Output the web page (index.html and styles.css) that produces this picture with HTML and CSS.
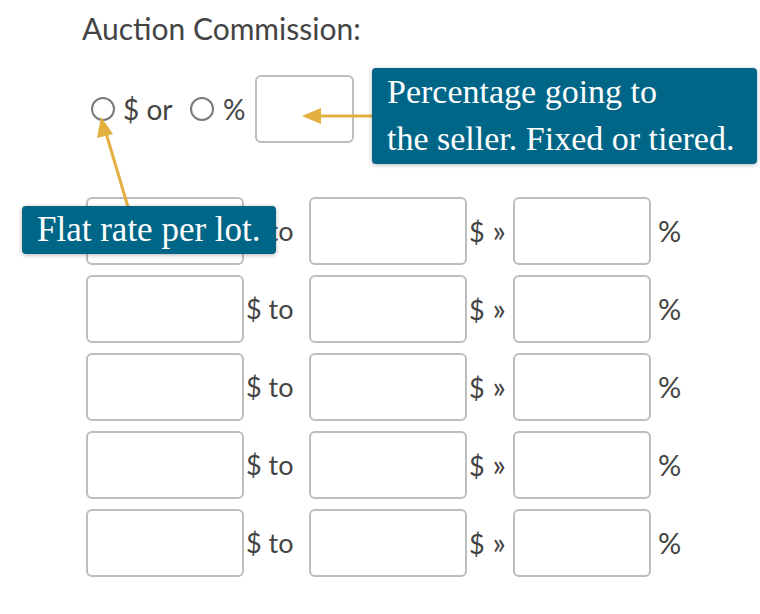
FILE: index.html
```html
<!DOCTYPE html>
<html>
<head>
<meta charset="utf-8">
<link rel="stylesheet" href="styles.css">
</head>
<body>
<div class="page">
  <div class="title">Auction Commission:</div>
  <div class="mode-row">
    <label class="opt opt-flat"><span class="radio"></span><span class="opt-text">$ or</span></label>
    <label class="opt opt-pct"><span class="radio"></span><span class="opt-text pct-sign">%</span></label>
    <span class="box box-pct"></span>
  </div>
  <div class="tiers">
    <span class="box box-a"></span><span class="lbl">$ to</span><span class="box box-a"></span><span class="lbl">$ <span class="raquo">»</span></span><span class="box box-b"></span><span class="lbl lbl-pct">%</span>
    <span class="box box-a"></span><span class="lbl">$ to</span><span class="box box-a"></span><span class="lbl">$ <span class="raquo">»</span></span><span class="box box-b"></span><span class="lbl lbl-pct">%</span>
    <span class="box box-a"></span><span class="lbl">$ to</span><span class="box box-a"></span><span class="lbl">$ <span class="raquo">»</span></span><span class="box box-b"></span><span class="lbl lbl-pct">%</span>
    <span class="box box-a"></span><span class="lbl">$ to</span><span class="box box-a"></span><span class="lbl">$ <span class="raquo">»</span></span><span class="box box-b"></span><span class="lbl lbl-pct">%</span>
    <span class="box box-a"></span><span class="lbl">$ to</span><span class="box box-a"></span><span class="lbl">$ <span class="raquo">»</span></span><span class="box box-b"></span><span class="lbl lbl-pct">%</span>
  </div>

  <svg class="arrows" width="760" height="614" viewBox="0 0 760 614">
    <line x1="373" y1="116" x2="318" y2="116" stroke="#e3b040" stroke-width="3"/>
    <polygon points="302,116 321,108 321,124" fill="#e3b040"/>
    <line x1="128" y1="207" x2="106" y2="133" stroke="#e3b040" stroke-width="3"/>
    <polygon points="101,117 113,134 97,138" fill="#e3b040"/>
  </svg>
  <div class="tip tip-pct">Percentage going to<br>the seller. Fixed or tiered.</div>
  <div class="tip tip-flat">Flat rate per lot.</div>
</div>
</body>
</html>
```
FILE: styles.css
```css
html, body {
  margin: 0;
  padding: 0;
  background: #ffffff;
}
.page {
  position: relative;
  width: 760px;
  height: 614px;
  overflow: hidden;
  font-family: Lato, "Open Sans", sans-serif;
  color: #444444;
}
.title {
  padding: 10px 0 0 82px;
  font-size: 30px;
  line-height: 36px;
}
.mode-row {
  display: flex;
  align-items: center;
  margin: 28px 0 0 91px;
  height: 69px;
}
.opt {
  display: flex;
  align-items: center;
}
.opt-flat {
  margin-right: 17px;
}
.opt-pct {
  margin-right: 8px;
}
.radio {
  display: inline-block;
  box-sizing: border-box;
  width: 24px;
  height: 24px;
  border: 2px solid #7a7a7a;
  border-radius: 50%;
  margin-right: 8px;
}
.opt-pct .radio {
  margin-right: 9px;
}
.opt-text {
  font-size: 28px;
  width: 50px;
  white-space: nowrap;
}
.opt-text.pct-sign {
  width: 24px;
}
.box {
  display: block;
  box-sizing: border-box;
  height: 68px;
  border: 2px solid #bdbdbd;
  border-radius: 6px;
  background: #fff;
}
.box-pct {
  width: 99px;
}
.tiers {
  display: grid;
  grid-template-columns: 158px 65px 158px 46px 138px auto;
  grid-auto-rows: 68px;
  row-gap: 10px;
  margin: 54px 0 0 86px;
  align-items: center;
}
.box-a, .box-b {
  width: 100%;
}
.lbl {
  font-size: 27px;
  line-height: 34px;
  padding-left: 2px;
  white-space: nowrap;
}
.raquo {
  font-size: 31px;
  line-height: 34px;
  margin-left: 1px;
}
.lbl-pct {
  padding-left: 7px;
  font-size: 29px;
}
.arrows {
  position: absolute;
  left: 0;
  top: 0;
}
.tip {
  position: absolute;
  box-sizing: border-box;
  background: #006688;
  color: #ffffff;
  font-family: "Liberation Serif", "Times New Roman", serif;
  border-radius: 4px;
  box-shadow: 0 1px 4px rgba(0, 0, 0, 0.3);
  white-space: nowrap;
}
.tip-pct {
  left: 372px;
  top: 68px;
  width: 385px;
  height: 96px;
  padding: 0 0 0 15px;
  font-size: 34px;
  line-height: 47px;
}
.tip-flat {
  left: 22px;
  top: 206px;
  width: 254px;
  height: 48px;
  padding-left: 15px;
  font-size: 35px;
  line-height: 48px;
}
```
